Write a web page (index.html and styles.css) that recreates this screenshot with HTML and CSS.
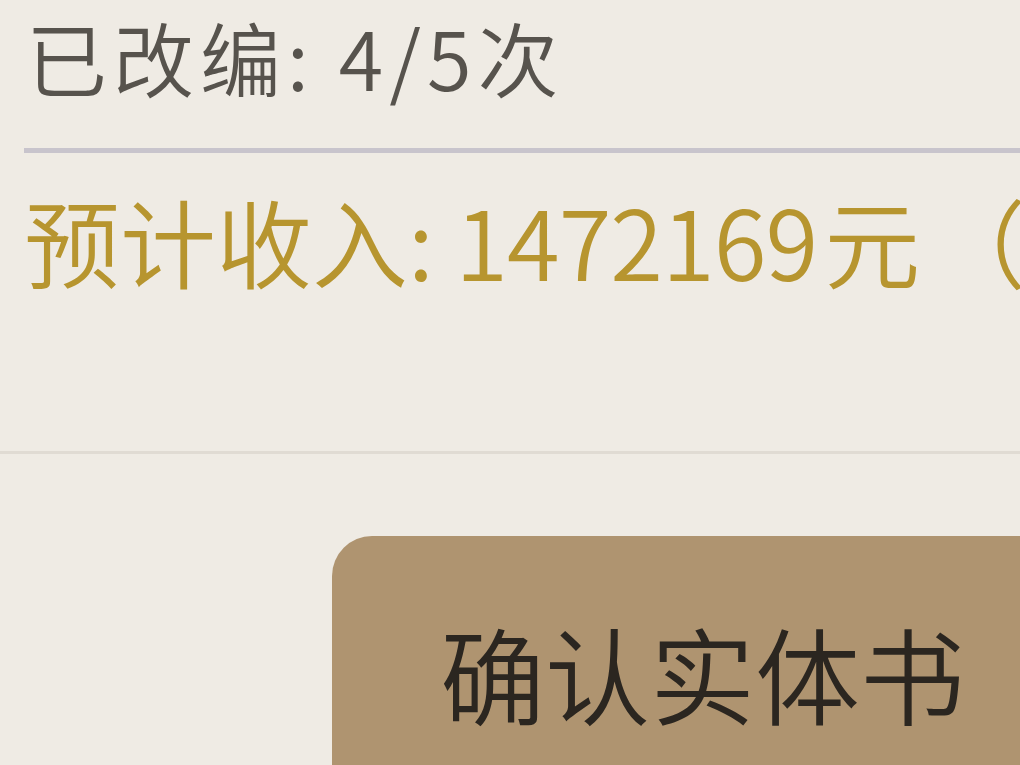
FILE: index.html
```html
<!DOCTYPE html>
<html lang="zh-CN">
<head>
<meta charset="utf-8">
<link rel="stylesheet" href="styles.css">
</head>
<body>
<div class="panel">
  <div class="info">
    <div class="count">已改编: 4/5次</div>
    <div class="divider"></div>
    <div class="income">预计收入: <span class="num">1472169</span><span class="unit">元</span>（</div>
  </div>
  <div class="rule"></div>
  <div class="actions">
    <button class="confirm">确认实体书</button>
  </div>
</div>
</body>
</html>
```
FILE: styles.css
```css
html, body {
  margin: 0;
  padding: 0;
  background: #efebe4;
  overflow: hidden;
  width: 1020px;
  height: 765px;
}
.panel {
  font-family: "Noto Sans CJK SC", "Noto Sans", sans-serif;
  font-weight: 350;
  display: flex;
  flex-direction: column;
  height: 765px;
  overflow: hidden;
}
.info {
  padding-left: 24px;
  height: 451px;
  box-sizing: border-box;
  display: flex;
  flex-direction: column;
  flex: none;
}
.count {
  font-size: 81px;
  line-height: 100px;
  color: #57534d;
  margin-top: 6px;
  margin-left: 2px;
  letter-spacing: 6px;
  white-space: nowrap;
}
.divider {
  height: 5px;
  margin-top: 42px;
  background: #c8c4cc;
}
.income {
  font-size: 96px;
  line-height: 110px;
  color: #b7952f;
  margin-top: 32px;
  white-space: nowrap;
}
.num {
  letter-spacing: -1px;
  margin-right: 7px;
}
.unit {
  margin-right: 10px;
}
.rule {
  height: 3px;
  background: #e0dbd3;
  flex: none;
}
.actions {
  display: flex;
  padding-left: 332px;
  padding-top: 82px;
  flex: none;
}
.confirm {
  flex: 1;
  height: 300px;
  border: none;
  border-radius: 40px 0 0 0;
  background: #af9470;
  color: #2b2620;
  font-family: "Noto Sans CJK SC", "Noto Sans", sans-serif;
  font-weight: 350;
  font-size: 105px;
  text-align: left;
  padding: 72px 0 0 108px;
  display: flex;
  align-items: flex-start;
  white-space: nowrap;
  line-height: 1.2;
}
```
